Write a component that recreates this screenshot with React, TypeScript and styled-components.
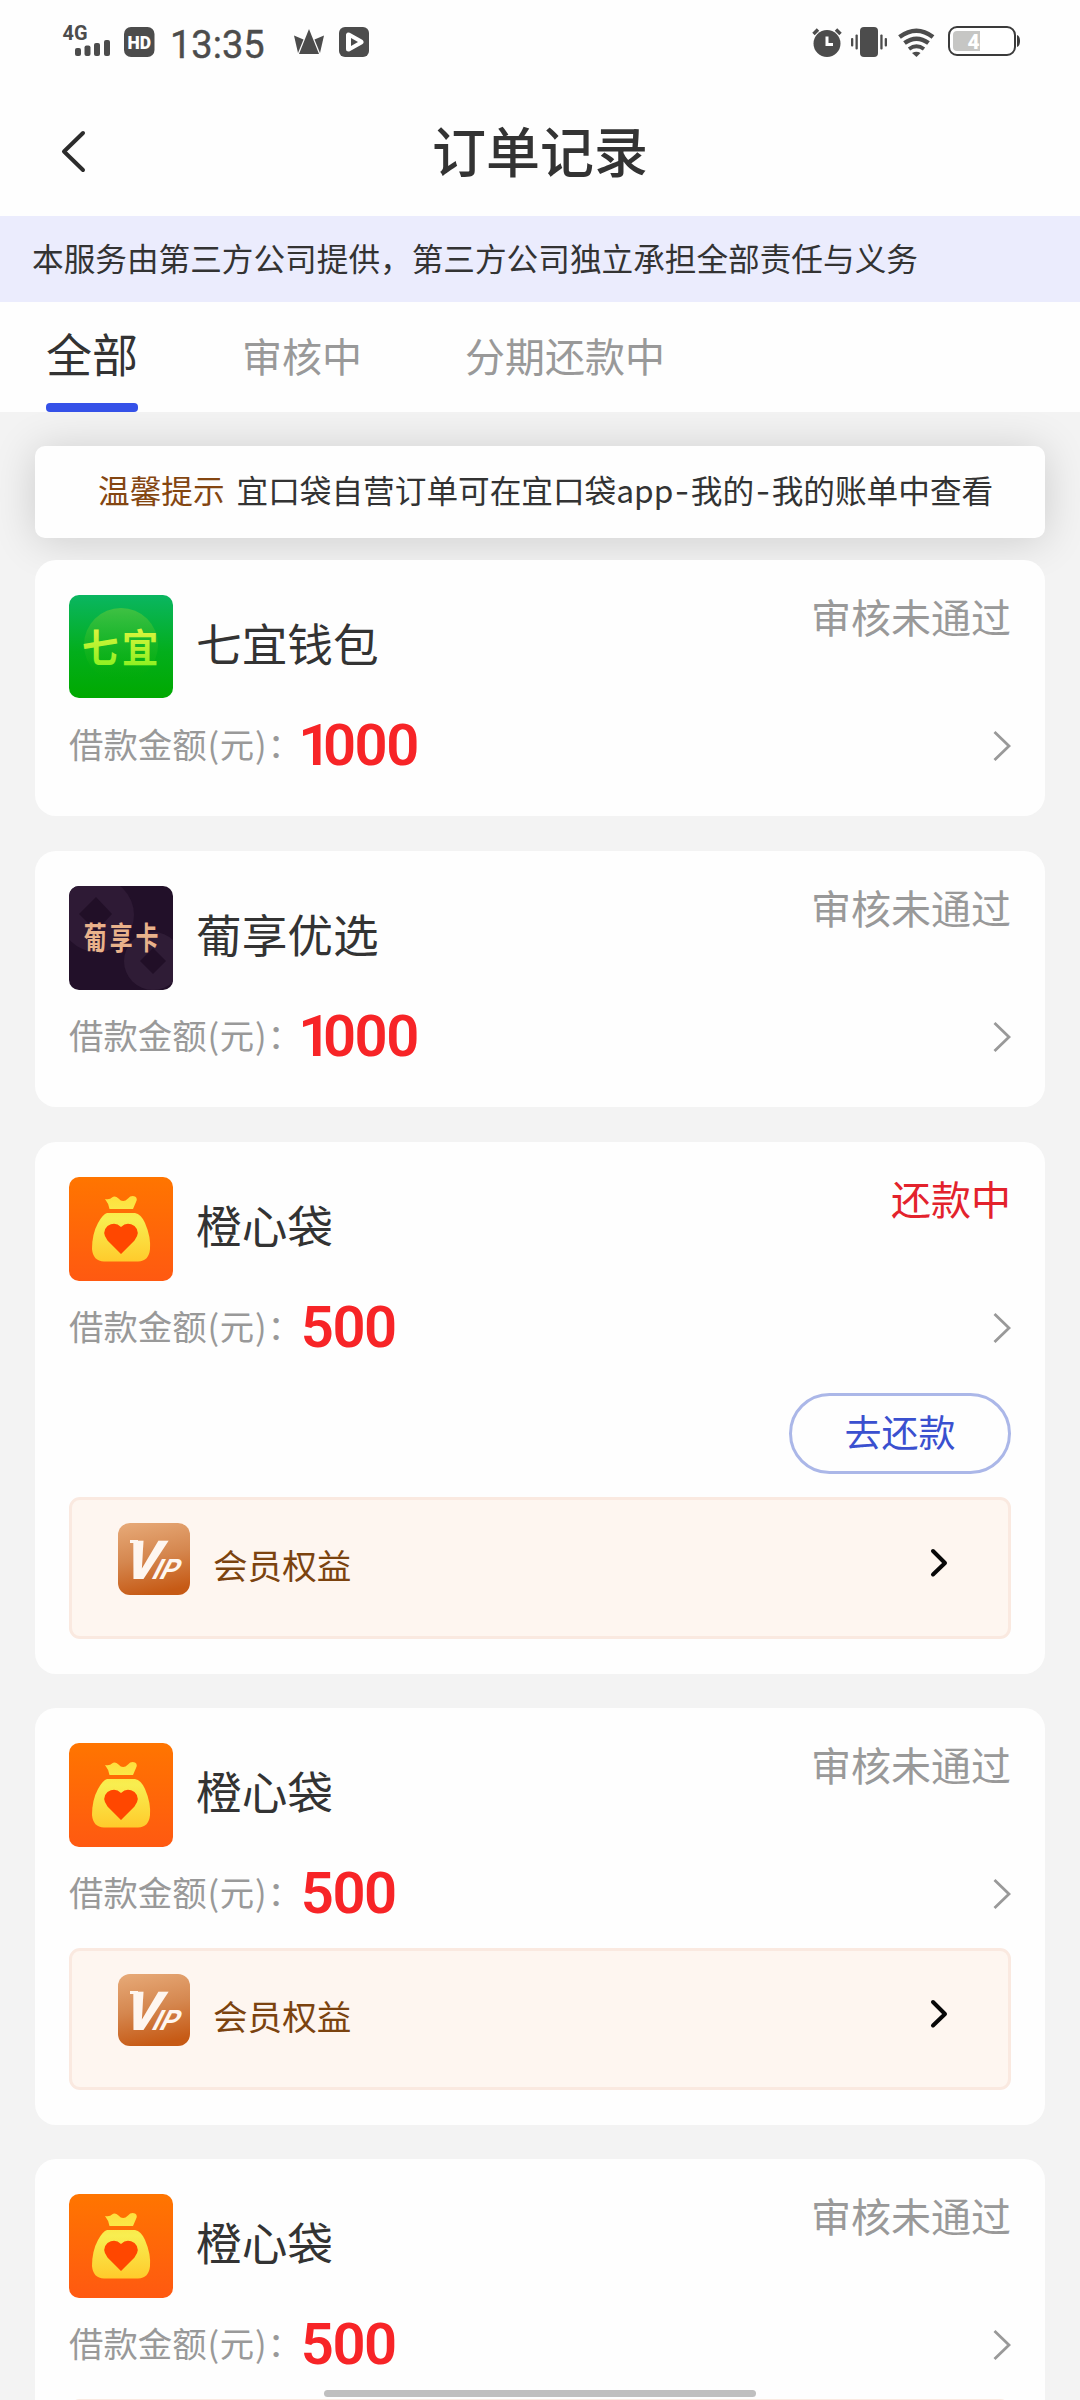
import React from "react";
import styled, { createGlobalStyle } from "styled-components";

const GlobalStyle = createGlobalStyle`
  * { box-sizing: border-box; }
  html, body { margin: 0; padding: 0; background: #f3f3f3; }
  body { font-family: "Noto Sans CJK SC", sans-serif; color: #333; }
`;

const Screen = styled.div`
  width: 1080px;
  height: 2400px;
  overflow: hidden;
  position: relative;
  display: flex;
  flex-direction: column;
  background: #f3f3f3;
`;

const StatusBar = styled.div`
  display: flex;
  justify-content: space-between;
  height: 84px;
  flex: none;
  padding: 0 60px;
  background: #fefefe;
`;

const StatusGroup = styled.div`
  display: flex;
  align-items: flex-start;
`;

const Clock = styled.div`
  font: 400 38px/42px Roboto, sans-serif;
  color: #4c4c4c;
  -webkit-text-stroke: 0.4px #4c4c4c;
  width: 123px;
  padding-left: 9px;
  margin-top: 24px;
`;

const Header = styled.header`
  height: 132px;
  flex: none;
  display: grid;
  grid-template-columns: 120px 1fr 120px;
  background: #fefefe;
`;

const BackButton = styled.div`
  padding: 45px 0 0 60px;
`;

const Title = styled.h1`
  margin: 0;
  text-align: center;
  font-size: 54px;
  font-weight: 500;
  line-height: 132px;
  color: #333;
`;

const Notice = styled.div`
  height: 86px;
  flex: none;
  padding-left: 32px;
  font-size: 31.65px;
  line-height: 83px;
  white-space: nowrap;
  background: #ebecfd;
`;

const Tabs = styled.nav`
  height: 110px;
  flex: none;
  display: flex;
  padding-left: 46px;
  background: #fefefe;
`;

const Tab = styled.div<{ $active?: boolean }>`
  display: flex;
  flex-direction: column;
  justify-content: space-between;
  margin-right: ${(p) => (p.$active ? 104 : 103)}px;
  font-size: ${(p) => (p.$active ? 46 : 40)}px;
  line-height: ${(p) => (p.$active ? 101 : 106)}px;
  height: 110px;
  color: ${(p) => (p.$active ? "#333" : "#999")};
`;

const TabLabel = styled.span`
  height: 101px;
`;

const TabLine = styled.span`
  height: 9px;
  border-radius: 4px;
  background: #3551e8;
`;

const List = styled.main`
  flex: 1;
  min-height: 0;
  overflow: hidden;
  padding: 34px 35px 0;
`;

const Tip = styled.div`
  height: 92px;
  padding-left: 63px;
  margin-bottom: 22px;
  border-radius: 10px;
  background: #fefefe;
  box-shadow: 0 3px 44px rgba(0, 0, 0, 0.16);
  font-size: 31.65px;
  line-height: 87px;
  white-space: nowrap;
`;

const TipLead = styled.span`
  margin-right: 12px;
  color: #844611;
`;

const Dash = styled.span`
  padding: 0 1.5px;
  font-family: Inter, sans-serif;
`;

const Card = styled.section<{ $gap: number }>`
  position: relative;
  padding: 35px 34px;
  margin-bottom: ${(p) => p.$gap}px;
  border-radius: 21px;
  background: #fefefe;
`;

const CardHead = styled.div`
  display: flex;
  height: 104px;
`;

const Name = styled.div`
  flex: 1;
  padding-left: 23px;
  font-size: 45.7px;
  line-height: 95px;
`;

const Status = styled.div<{ $due?: boolean }>`
  font-size: 40px;
  line-height: 42px;
  color: ${(p) => (p.$due ? "#e3222c" : "#999")};
`;

const AmountRow = styled.div`
  display: flex;
  align-items: center;
  height: 60px;
  margin: 16px 0 6px;
`;

const AmountLabel = styled.span`
  font-size: 34.4px;
  line-height: 59px;
  height: 62px;
  color: #999;
`;

const Paren = styled.span`
  padding: 0 0.8px;
`;

const Amount = styled.span<{ $one: boolean }>`
  flex: 1;
  margin-left: ${(p) => (p.$one ? -3.5 : -1)}px;
  font: 600 58px/62px Roboto, sans-serif;
  letter-spacing: -1.5px;
  color: #f72427;

  &::first-letter {
    letter-spacing: ${(p) => (p.$one ? -8.5 : -1.5)}px;
  }
`;

const PayRow = styled.div`
  display: flex;
  justify-content: flex-end;
  margin: 36px 0 23px;
`;

const PayButton = styled.button`
  width: 222px;
  height: 81px;
  padding: 0 0 5px;
  border: 3px solid #abb7e8;
  border-radius: 41px;
  background: #fefefe;
  color: #3a50cf;
  font: 400 37px/70px "Noto Sans CJK SC", sans-serif;
`;

const Benefits = styled.div<{ $top: number }>`
  display: flex;
  height: 142px;
  margin-top: ${(p) => p.$top}px;
  padding: 23px 60px 0 46px;
  border: 3px solid #fae9e0;
  border-radius: 11px;
  background: #fef6f0;
`;

const BenefitsLabel = styled.span`
  flex: 1;
  padding-left: 23px;
  font-size: 34.6px;
  line-height: 83px;
  color: #7b430f;
`;

const BenefitsArrow = styled.span`
  padding-top: 25px;
`;

const HomeBar = styled.div`
  position: absolute;
  left: 324px;
  top: 2390px;
  width: 432px;
  height: 7px;
  border-radius: 4px;
  background: #bfbfbf;
`;

const INK = "#4c4c4c";
const CJK = "'Noto Sans CJK SC', sans-serif";

const LeftIcons = () => (
  <svg width="101" height="84" viewBox="60 0 101 84">
    <text x="62.5" y="40" fontFamily="Roboto, sans-serif" fontWeight="700" fontSize="21" fill={INK} textLength="25" lengthAdjust="spacingAndGlyphs">4G</text>
    <g fill={INK}>
      <rect x="75" y="48" width="6" height="8" rx="2" />
      <rect x="84.5" y="45.5" width="6" height="10.5" rx="2" />
      <rect x="94" y="43" width="6" height="13" rx="2" />
      <rect x="104" y="40" width="6" height="16" rx="2" />
      <rect x="124" y="27" width="30.5" height="30" rx="7" />
    </g>
    <text x="127.5" y="49" fontFamily="Roboto, sans-serif" fontWeight="900" fontSize="19" fill="#fff" textLength="23.5" lengthAdjust="spacingAndGlyphs">HD</text>
  </svg>
);

const AppIcons = () => (
  <svg width="90" height="84" viewBox="284 0 90 84">
    <g fill={INK}>
      <path d="M309 29 L319 54 H299 Z" />
      <path d="M294 35.500 L303.500 39.500 L298 53 Z" />
      <path d="M324 35.500 L314.500 39.500 L320 53 Z" />
      <rect x="339" y="27" width="30" height="30" rx="6" />
    </g>
    <path d="M348.500 35 V49 L361 42 Z" fill="#fff" stroke="#fff" strokeWidth="5" strokeLinejoin="round" />
    <path d="M351 38 V46 L358 42 Z" fill={INK} />
  </svg>
);

const RightIcons = () => (
  <svg width="212" height="84" viewBox="808 0 212 84">
    <g fill={INK}>
      <circle cx="827" cy="43.500" r="13.500" />
      <path d="M813.500 34 L818 29.500 M840.500 34 L836 29.500" stroke={INK} strokeWidth="3.500" />
      <rect x="860" y="27" width="18" height="30" rx="4" />
      <rect x="855.500" y="34.500" width="2.300" height="15" rx="1" />
      <rect x="851" y="38" width="2.300" height="8.500" rx="1" />
      <rect x="880.300" y="34.500" width="2.300" height="15" rx="1" />
      <rect x="884.700" y="38" width="2.300" height="8.500" rx="1" />
    </g>
    <path d="M827 36.500 V44.500 H833" fill="none" stroke="#fff" strokeWidth="3" />
    <g fill="none" stroke={INK} strokeWidth="4.500">
      <path d="M899.500 37 Q916.500 24.500 933 37" />
      <path d="M904.500 43 Q916.500 34.500 928.500 43" />
      <path d="M909 49 Q916.500 43.500 924 49" strokeWidth="3.800" />
    </g>
    <path d="M912 53 Q916.500 50.500 920.500 53 L916.500 57 Z" fill={INK} />
    <rect x="949" y="27" width="66" height="28" rx="8" fill="#fff" stroke="#3b3b3b" strokeWidth="2" />
    <path d="M1017 35 Q1020 36 1020 41 Q1020 46 1017 47 Z" fill="#3b3b3b" />
    <path d="M957 31 H980 V51 H957 Q953 51 953 47 V35 Q953 31 957 31 Z" fill="#c6c6c4" />
    <text x="967.500" y="49" fontFamily="Roboto, sans-serif" fontWeight="800" fontSize="21" fill="#fff">4</text>
  </svg>
);

const BackIcon = () => (
  <svg width="30" height="46" viewBox="0 0 30 46" fill="none" stroke="#2c2c2c" strokeWidth="4" strokeLinecap="round" strokeLinejoin="round">
    <path d="M23 4 L4 22.500 L23 41" />
  </svg>
);

const RowArrow = () => (
  <svg width="18" height="32" viewBox="0 0 18 32" fill="none" stroke="#999" strokeWidth="2.800">
    <path d="M1.500 3 L16 17 L1.500 31" />
  </svg>
);

const BoldArrow = () => (
  <svg width="18" height="30" viewBox="0 0 18 30" fill="none" stroke="#080808" strokeWidth="4" strokeLinecap="round" strokeLinejoin="round">
    <path d="M3 3 L15 15 L3 26.500" />
  </svg>
);

const QiyiLogo = () => (
  <svg width="104" height="103" viewBox="0 0 104 103">
    <defs>
      <linearGradient id="qyBg" x1="0" y1="0" x2="0" y2="1">
        <stop offset="0" stopColor="#0ab661" />
        <stop offset="0.55" stopColor="#03ae1c" />
        <stop offset="1" stopColor="#00a900" />
      </linearGradient>
      <linearGradient id="qyDisc" x1="0" y1="0" x2="0" y2="1">
        <stop offset="0" stopColor="#3fc143" />
        <stop offset="0.7" stopColor="#14b419" stopOpacity="0.5" />
        <stop offset="1" stopColor="#00a900" stopOpacity="0" />
      </linearGradient>
      <linearGradient id="qyText" x1="0" y1="0" x2="0" y2="1">
        <stop offset="0.15" stopColor="#e6f540" />
        <stop offset="1" stopColor="#7df01c" />
      </linearGradient>
    </defs>
    <rect width="104" height="103" rx="10" fill="url(#qyBg)" />
    <circle cx="52" cy="50" r="37" fill="url(#qyDisc)" />
    <g fontFamily={CJK} fontWeight="700" fontSize="39" fill="url(#qyText)" transform="scale(0.93 1)">
      <text x="14" y="67">七</text>
      <text x="57" y="67">宜</text>
    </g>
  </svg>
);

const PuxiangLogo = () => (
  <svg width="104" height="104" viewBox="0 0 104 104">
    <defs>
      <clipPath id="pxClip"><rect width="104" height="104" rx="10" /></clipPath>
    </defs>
    <g clipPath="url(#pxClip)">
      <rect width="104" height="104" fill="#221029" />
      <circle cx="28" cy="29" r="37" fill="#2e1a35" />
      <path d="M27 11 L43 28 L27 45 L10 28 Z" fill="#210f27" />
      <circle cx="84" cy="75" r="29" fill="#2f1c36" />
      <path d="M84 62 L97 75 L84 88 L71 75 Z" fill="#210f27" />
      <g fontFamily={CJK} fontWeight="700" fontSize="31" fill="#e9b28b" transform="scale(0.74 1)">
        <text x="20" y="63">葡</text>
        <text x="55" y="63">享</text>
        <text x="90" y="63">卡</text>
      </g>
    </g>
  </svg>
);

const BagLogo = () => (
  <svg width="104" height="104" viewBox="0 0 104 104">
    <defs>
      <linearGradient id="bagBg" x1="0" y1="0" x2="0" y2="1">
        <stop offset="0" stopColor="#ff7500" />
        <stop offset="1" stopColor="#ff5911" />
      </linearGradient>
      <linearGradient id="bagBody" gradientUnits="userSpaceOnUse" x1="0" y1="19" x2="0" y2="84">
        <stop offset="0" stopColor="#ffdf3c" />
        <stop offset="0.35" stopColor="#f8ee50" />
        <stop offset="1" stopColor="#ffcb2c" />
      </linearGradient>
    </defs>
    <rect width="104" height="104" rx="10" fill="url(#bagBg)" />
    <path d="M36 22 Q41 23 43 20.500 Q46 18 49.500 21.500 Q54 26.500 59 21.500 Q62 18 66 19.500 Q69 21.500 67 25 L64 32 H40.500 Q40 27 36 22 Z" fill="url(#bagBody)" />
    <path d="M38 36 H66 Q72 37 76 46 Q82 60 81 72 Q80 84 69 84.500 H35 Q24 84 23 72 Q23 57 29 46 Q34 37 38 36 Z" fill="url(#bagBody)" />
    <path d="M52 77 L38.500 63.500 Q32 55 38.500 49 Q46 44 52 50 Q58 44 65.500 49 Q72 55 65.500 63.500 Z" fill="#ff4700" />
  </svg>
);

const VipIcon = () => (
  <svg width="72" height="72" viewBox="0 0 72 72">
    <defs>
      <linearGradient id="vipBg" x1="0.2" y1="0" x2="0.4" y2="1">
        <stop offset="0" stopColor="#e6a876" />
        <stop offset="0.5" stopColor="#d5874f" />
        <stop offset="1" stopColor="#c65a15" />
      </linearGradient>
    </defs>
    <rect width="72" height="72" rx="12" fill="url(#vipBg)" />
    <g fill="#fef6f0" fontFamily="Roboto, sans-serif">
      <rect x="12" y="17" width="8" height="3" />
      <text transform="translate(3 56) skewX(-18)" fontSize="54" fontWeight="900" textLength="35" lengthAdjust="spacingAndGlyphs">V</text>
      <text transform="translate(32 56) skewX(-27)" fontSize="28" fontWeight="700" textLength="25" lengthAdjust="spacingAndGlyphs">IP</text>
    </g>
  </svg>
);

type Order = {
  logo: React.ReactNode;
  name: string;
  status: string;
  amount: string;
  due?: boolean;
  benefits?: "full" | "edge";
};

const orders: Order[] = [
  { logo: <QiyiLogo />, name: "七宜钱包", status: "审核未通过", amount: "1000" },
  { logo: <PuxiangLogo />, name: "葡享优选", status: "审核未通过", amount: "1000" },
  { logo: <BagLogo />, name: "橙心袋", status: "还款中", amount: "500", due: true, benefits: "full" },
  { logo: <BagLogo />, name: "橙心袋", status: "审核未通过", amount: "500", benefits: "full" },
  { logo: <BagLogo />, name: "橙心袋", status: "审核未通过", amount: "500", benefits: "edge" },
];

const OrderCard = ({ order }: { order: Order }) => (
  <Card $gap={order.benefits ? 34 : 35}>
    <CardHead>
      {order.logo}
      <Name>{order.name}</Name>
      <Status $due={order.due}>{order.status}</Status>
    </CardHead>
    <AmountRow>
      <AmountLabel>
        借款金额<Paren>(</Paren>元<Paren>)</Paren>：
      </AmountLabel>
      <Amount $one={order.amount.startsWith("1")}>{order.amount}</Amount>
      <RowArrow />
    </AmountRow>
    {order.due && (
      <PayRow>
        <PayButton>去还款</PayButton>
      </PayRow>
    )}
    {order.benefits && (
      <Benefits $top={order.due ? 0 : 25}>
        {/* the panel below the fold only shows its top edge */}
        {order.benefits === "full" && (
          <>
            <VipIcon />
            <BenefitsLabel>会员权益</BenefitsLabel>
            <BenefitsArrow>
              <BoldArrow />
            </BenefitsArrow>
          </>
        )}
      </Benefits>
    )}
  </Card>
);

export default function App() {
  return (
    <Screen>
      <GlobalStyle />
      <StatusBar>
        <StatusGroup>
          <LeftIcons />
          <Clock>13:35</Clock>
          <AppIcons />
        </StatusGroup>
        <RightIcons />
      </StatusBar>
      <Header>
        <BackButton>
          <BackIcon />
        </BackButton>
        <Title>订单记录</Title>
      </Header>
      <Notice>本服务由第三方公司提供，第三方公司独立承担全部责任与义务</Notice>
      <Tabs>
        <Tab $active>
          <TabLabel>全部</TabLabel>
          <TabLine />
        </Tab>
        <Tab>审核中</Tab>
        <Tab>分期还款中</Tab>
      </Tabs>
      <List>
        <Tip>
          <TipLead>温馨提示</TipLead>
          宜口袋自营订单可在宜口袋app<Dash>-</Dash>我的<Dash>-</Dash>我的账单中查看
        </Tip>
        {orders.map((order, i) => (
          <OrderCard key={i} order={order} />
        ))}
      </List>
      <HomeBar />
    </Screen>
  );
}
